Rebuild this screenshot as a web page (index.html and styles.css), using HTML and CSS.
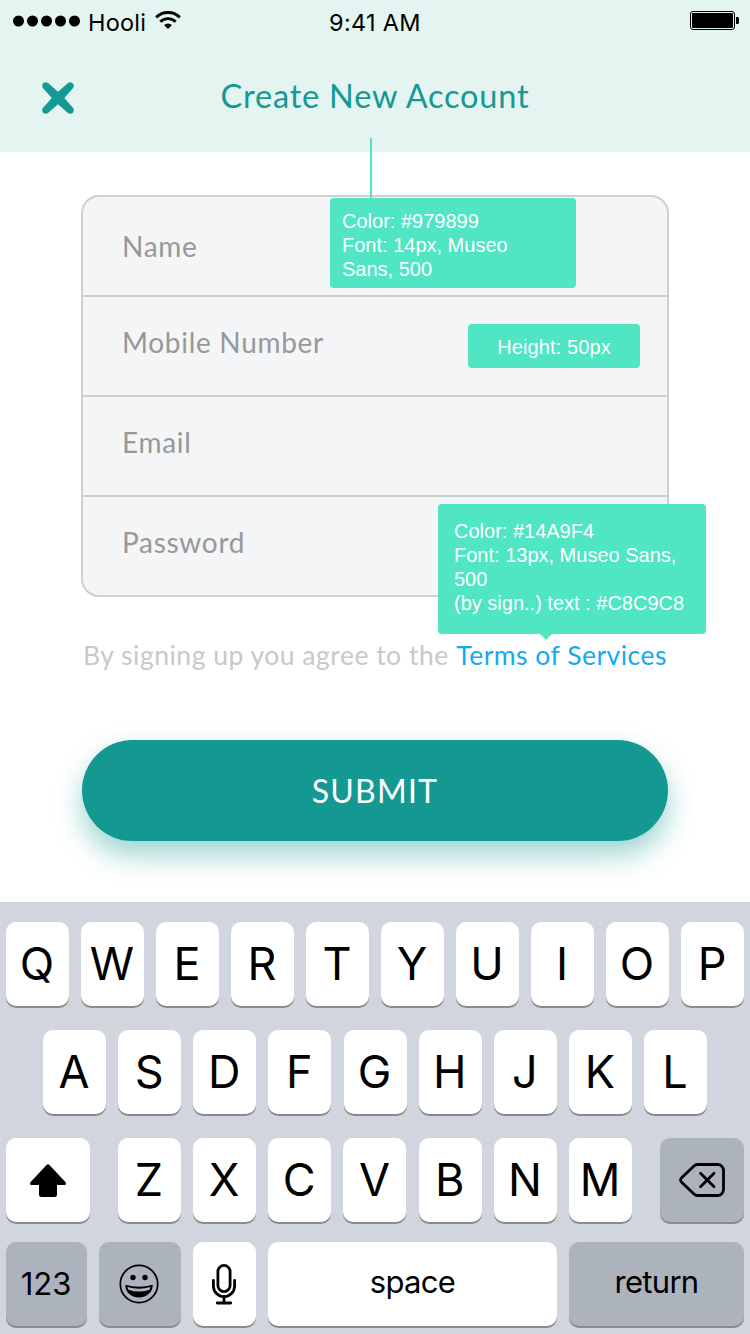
FILE: index.html
```html
<!DOCTYPE html>
<html lang="en">
<head>
<meta charset="utf-8">
<title>Create New Account</title>
<link rel="stylesheet" href="styles.css">
</head>
<body>
<div class="screen">
  <header class="header">
    <div class="status">
      <div class="carrier">
        <svg class="signal" width="68" height="12" viewBox="0 0 68 12"><circle cx="5.5" cy="6" r="5.5"/><circle cx="19.5" cy="6" r="5.5"/><circle cx="33.5" cy="6" r="5.5"/><circle cx="47.5" cy="6" r="5.5"/><circle cx="61.5" cy="6" r="5.5"/></svg>
        <span class="carrier-name">Hooli</span>
        <svg class="wifi" width="26" height="19" viewBox="0 0 26 19"><path d="M1.2 6.400a16.700 16.700 0 0 1 23.600 0" fill="none" stroke="#000" stroke-width="2.900"/><path d="M5.300 10.800a11 11 0 0 1 15.400 0" fill="none" stroke="#000" stroke-width="2.900"/><path d="M9 14a6 6 0 0 1 8 0L13 18z"/></svg>
      </div>
      <span class="time">9:41 AM</span>
      <svg class="battery" width="49" height="19" viewBox="0 0 49 19"><rect x=".5" y=".5" width="44" height="18" rx="2.5" fill="none" stroke="#000"/><rect x="2" y="2" width="41" height="15" rx="1"/><path d="M46 6h1.5q1.500 0 1.500 1.500v4q0 1.500-1.500 1.500h-1.500z"/></svg>
    </div>
    <div class="titlebar">
      <svg class="close" width="34" height="34" viewBox="0 0 34 34"><path d="M7 1.900 17 10.700 27 1.900C30.500-.5 34.500 3.500 32.100 7L23.300 17 32.100 27C34.500 30.500 30.500 34.500 27 32.100L17 23.300 7 32.100C3.500 34.500-.5 30.500 1.900 27L10.700 17 1.900 7C-.5 3.500 3.500-.5 7 1.900z"/></svg>
      <h1 class="title">Create New Account</h1>
    </div>
  </header>

  <main class="main">
    <div class="form">
      <div class="field"><span>Name</span>
        <div class="note note-field">Color: #979899<br>Font: 14px, Museo<br>Sans, 500</div>
      </div>
      <div class="field field-raised"><span>Mobile Number</span>
        <div class="note note-height">Height: 50px</div>
      </div>
      <div class="field field-raised"><span>Email</span></div>
      <div class="field field-raised"><span>Password</span>
        <div class="note note-terms">Color: #14A9F4<br>Font: 13px, Museo Sans,<br>500<br>(by sign..) text : #C8C9C8</div>
      </div>
    </div>
    <p class="terms"><span>By signing up you agree to the</span><a class="terms-link">Terms of Services</a></p>
    <div class="submit">SUBMIT</div>
  </main>

  <div class="keyboard">
    <div class="row"><b class="key">Q</b><b class="key">W</b><b class="key">E</b><b class="key">R</b><b class="key">T</b><b class="key">Y</b><b class="key">U</b><b class="key">I</b><b class="key">O</b><b class="key">P</b></div>
    <div class="row row-home"><b class="key">A</b><b class="key">S</b><b class="key">D</b><b class="key">F</b><b class="key">G</b><b class="key">H</b><b class="key">J</b><b class="key">K</b><b class="key">L</b></div>
    <div class="row row-lower">
      <b class="key key-side"><svg width="36" height="33" viewBox="0 0 36 33"><path d="M16.800.8q1.200-1.200 2.400 0L35.400 18q1.500 3-1 3H27v9.500q0 2.500-2.500 2.500h-13q-2.500 0-2.500-2.500V21H1.600q-2.500 0-1-3z"/></svg></b>
      <div class="letters"><b class="key">Z</b><b class="key">X</b><b class="key">C</b><b class="key">V</b><b class="key">B</b><b class="key">N</b><b class="key">M</b></div>
      <b class="key key-side key-grey"><svg width="46" height="34" viewBox="0 0 46 34" fill="none" stroke="#000" stroke-width="2.800" stroke-linecap="round"><path d="M18.500 1.500H38.500a6 6 0 0 1 6 6v19a6 6 0 0 1-6 6H18.500q-2 0-3.500-1.500L2.400 19q-1.600-2 0-4L15 3q1.500-1.500 3.500-1.500z"/><path d="M21.500 10.200l13.500 13.600M35 10.200 21.500 23.800"/></svg></b>
    </div>
    <div class="row row-bottom">
      <b class="key key-grey key-word key-num">123</b>
      <b class="key key-grey key-emoji"><svg width="40" height="40" viewBox="0 0 40 40"><circle cx="20" cy="20" r="18.700" fill="none" stroke="#000" stroke-width="1.700"/><circle cx="14" cy="13.500" r="2.700"/><circle cx="26" cy="13.500" r="2.700"/><path d="M6.300 20.800Q20 24.800 33.700 20.800C34 28 28 33.500 20 33.500S6 28 6.300 20.800z"/><path d="M8.500 23Q20 26.500 31.500 23L30.700 25.700Q20 29.500 9.300 25.700z" fill="#acb3bd"/></svg></b>
      <b class="key"><svg width="26" height="42" viewBox="0 0 26 42" fill="none" stroke="#000" stroke-width="2.800" stroke-linecap="round"><rect x="6.900" y="2.400" width="12.200" height="26.200" rx="6.100"/><path d="M2.400 17.500v5.500a10.600 10.600 0 0 0 21.200 0V17.500M13 33.500v6.500M6.300 40h13.400"/></svg></b>
      <b class="key key-word key-space">space</b>
      <b class="key key-grey key-word key-return">return</b>
    </div>
  </div>
</div>
</body>
</html>
```
FILE: styles.css
```css
* { box-sizing: border-box; }
body { margin: 0; background: #fff; }
svg { display: block; flex: none; }
.screen { width: 750px; height: 1334px; overflow: hidden; display: flex; flex-direction: column; background: #fff; font-family: Lato, "Open Sans", sans-serif; }

.header { height: 152px; background: #e4f4f0; flex: none; }
.status { height: 40px; padding: 0 11px 0 13px; display: grid; grid-template-columns: 1fr auto 1fr; align-items: start; font: 400 23.5px/40px Inter, sans-serif; }
.carrier { display: flex; }
.signal { margin-top: 14.500px; }
.carrier-name { margin: 3px 0 0 7px; letter-spacing: .2px; }
.wifi { margin: 11px 0 0 9px; }
.time { margin: 3px 2px 0 0; letter-spacing: .3px; }
.battery { margin-top: 11px; justify-self: end; }
.titlebar { height: 112px; padding: 0 41px; display: grid; grid-template-columns: 34px 1fr 34px; align-items: start; }
.close { fill: #149993; margin-top: 41px; }
.title { margin: 36px 0 0; text-align: center; font-size: 32.500px; line-height: 40px; font-weight: 400; letter-spacing: .8px; color: #149993; white-space: nowrap; }

.main { height: 750px; flex: none; padding: 43px 81px 0; }
.form { border: 2px solid #cfd0d1; border-radius: 18px; background: #f4f5f7; }
.field { position: relative; height: 100px; padding-left: 39px; display: flex; align-items: center; border-bottom: 2px solid #cfd0d1; color: #979899; font-size: 28px; line-height: 32px; letter-spacing: .7px; }
.field:last-child { height: 98px; border-bottom: 0; }
.field-raised { padding-bottom: 9px; }

.note { position: absolute; border-radius: 4px; background: #50e5c3; color: #fff; font: 400 20px/24px "Liberation Sans", Arial, sans-serif; letter-spacing: 0; white-space: nowrap; }
.note-field { left: 247px; top: 1px; width: 246px; height: 90px; padding: 11px 12px; }
.note-field::before { content: ""; position: absolute; left: 40px; bottom: 100%; width: 2px; height: 60px; background: #50e5c3; }
.note-height { left: 385px; top: 27px; width: 172px; height: 44px; padding-top: 11px; text-align: center; letter-spacing: .1px; }
.note-terms { left: 355px; top: 7px; width: 268px; height: 130px; padding: 15px 16px; }
.note-terms::after { content: ""; position: absolute; left: 102px; top: 100%; border: 6px solid transparent; border-top-color: #50e5c3; border-bottom: 0; }

.terms { margin: 42px 0 0; padding: 0 2px; display: flex; justify-content: space-between; font-size: 26.500px; line-height: 32px; white-space: nowrap; color: #c8c9c8; letter-spacing: .5px; }
.terms-link { color: #14a9f4; }
.submit { margin: 69px 1px 0; height: 101px; border-radius: 51px; background: #149892; color: #fff; text-align: center; font-size: 32px; line-height: 102px; letter-spacing: 1.200px; box-shadow: 0 14px 28px rgba(20, 152, 146, .42); }

.keyboard { flex: 1; padding: 20px 6px 0; background: #d1d5dd; color: #000; font-family: Inter, sans-serif; }
.row { display: flex; justify-content: space-between; margin-bottom: 24px; }
.row-home { padding: 0 37px; }
.row-lower { margin-bottom: 20px; }
.letters { width: 514.200px; display: flex; justify-content: space-between; }
.key { width: 63px; height: 84px; flex: none; padding: 0 1px 2px 0; display: flex; align-items: center; justify-content: center; border-radius: 10px; background: #fff; box-shadow: 0 2px 0 #898a8d; font-size: 45px; font-weight: 400; }
.key svg { margin-top: 2px; }
.key-side { width: 84px; padding-right: 0; }
.key-grey { background: #acb3bd; }
.key-word { font-size: 31px; }
.key-num { width: 81px; }
.key-emoji { width: 82px; padding-right: 2px; }
.key-space { width: 289px; letter-spacing: -.700px; padding: 0 0 5px; }
.key-return { width: 175px; letter-spacing: -.700px; padding: 0 0 5px; }
```
